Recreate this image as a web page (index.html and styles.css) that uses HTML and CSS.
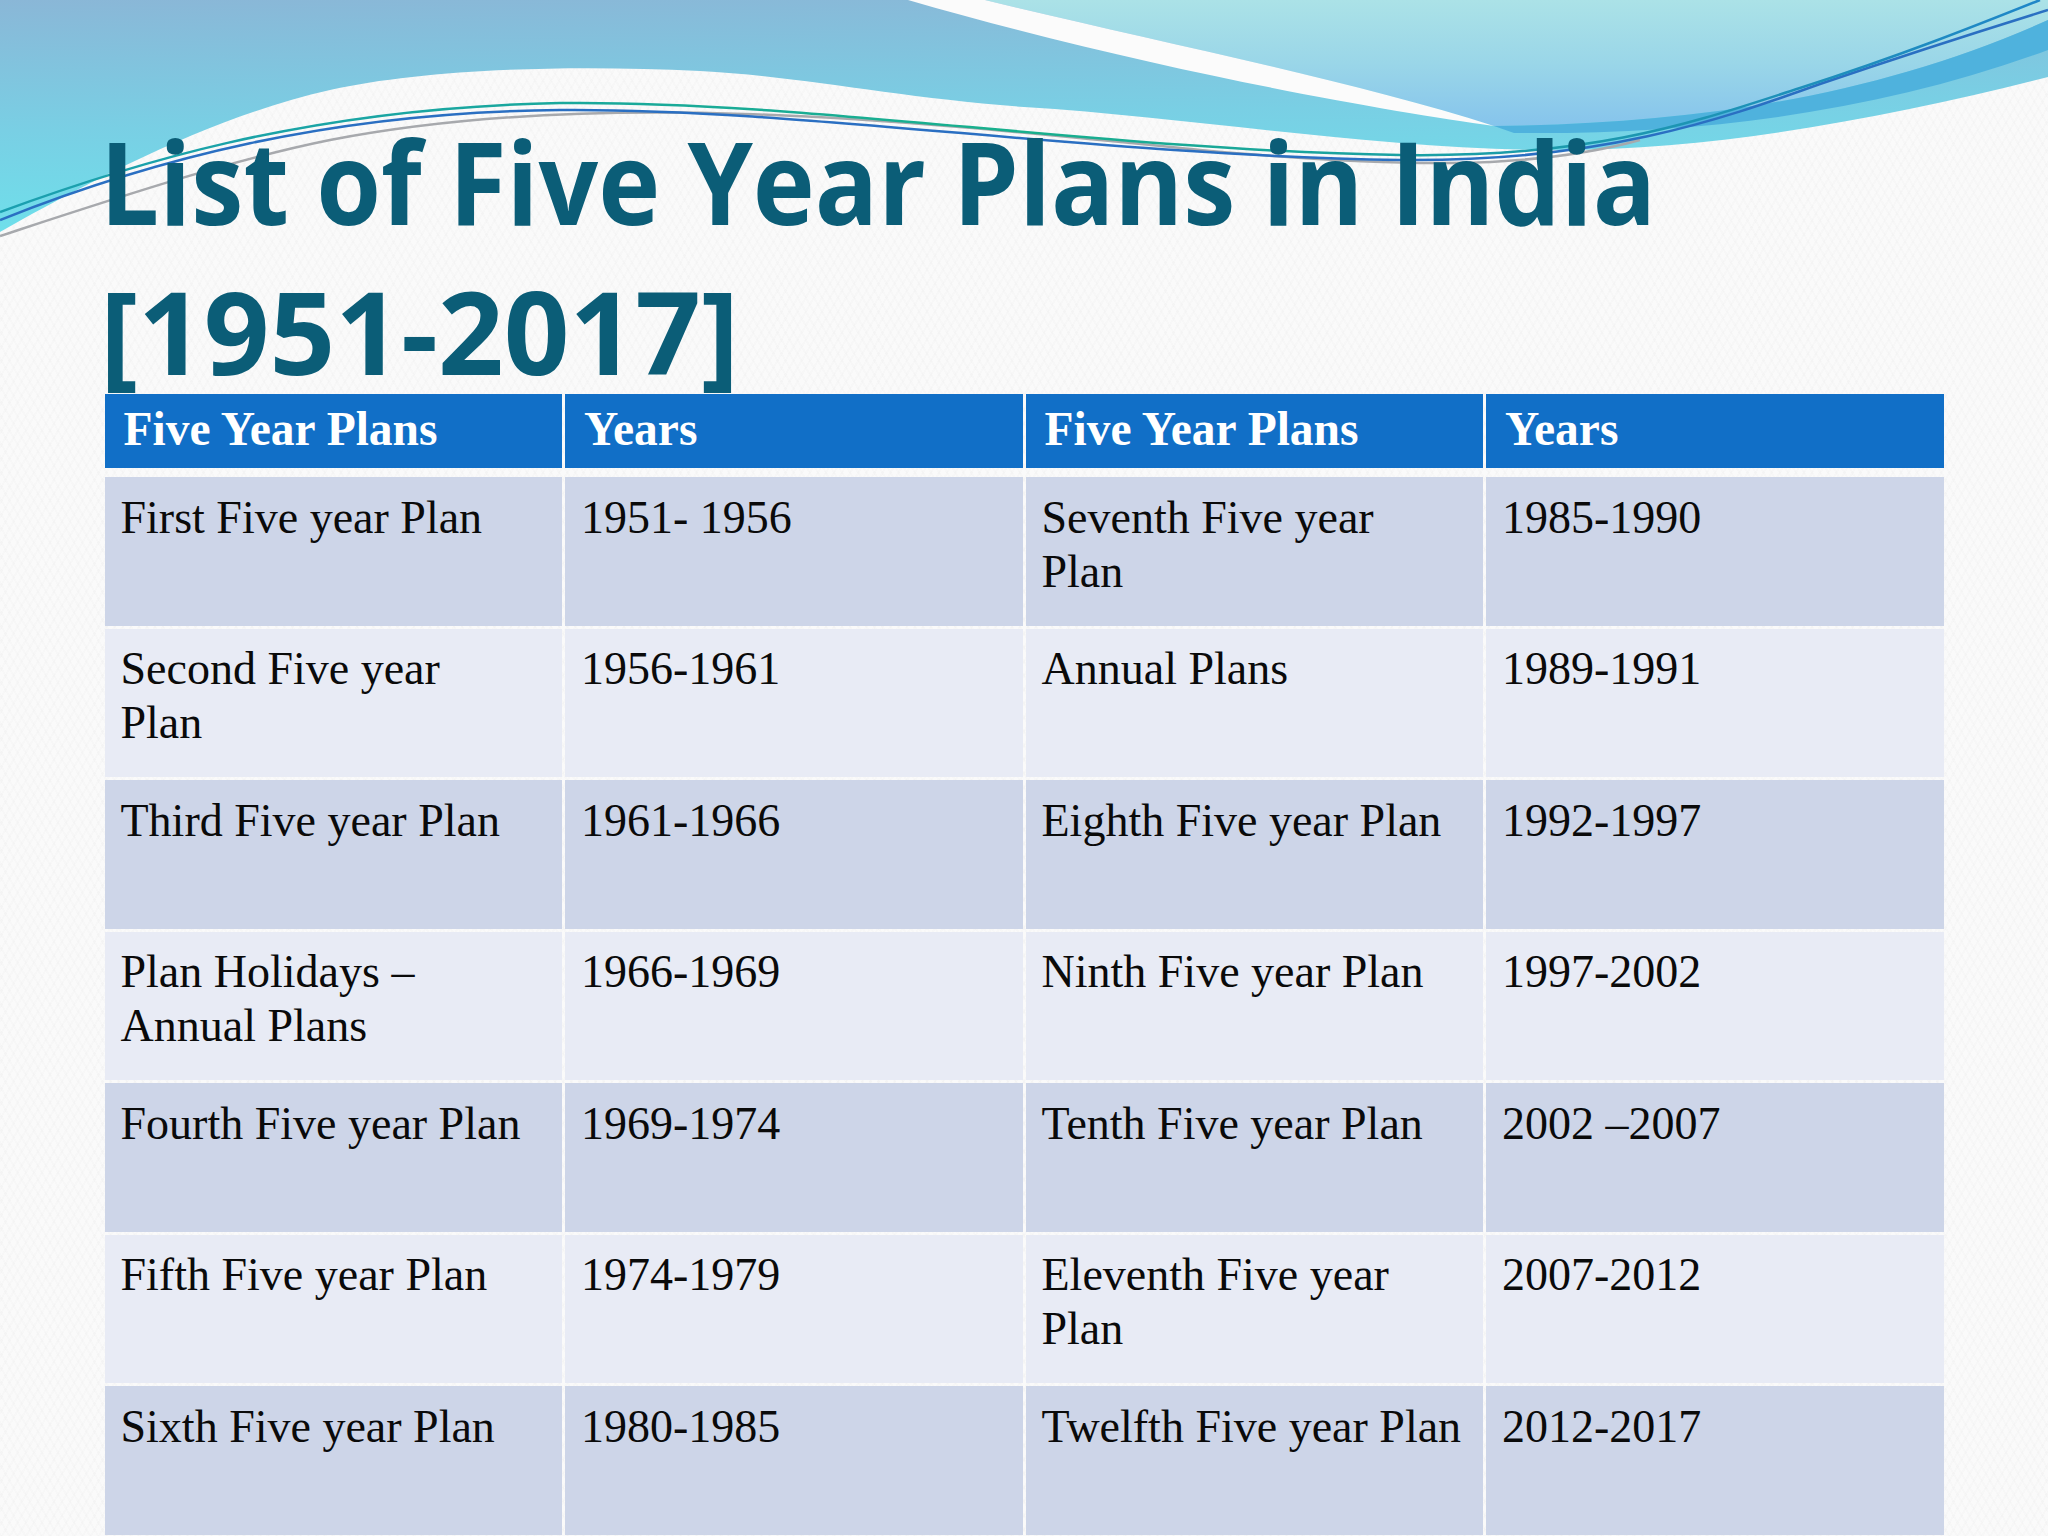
FILE: index.html
```html
<!DOCTYPE html>
<html lang="en">
<head>
<meta charset="utf-8">
<title>List of Five Year Plans in India</title>
<link rel="stylesheet" href="styles.css">
</head>
<body>
<div class="slide">
  <svg class="waves" viewBox="0 0 2048 260" width="2048" height="260" aria-hidden="true">
    <defs>
      <linearGradient id="gBase" x1="0" y1="0" x2="0.15" y2="1">
        <stop offset="0" stop-color="#8ab7d7"/>
        <stop offset="0.55" stop-color="#79cfe4"/>
        <stop offset="1" stop-color="#6ee0eb"/>
      </linearGradient>
      <linearGradient id="gRight" x1="0" y1="0" x2="0" y2="1">
        <stop offset="0" stop-color="#abe2e7"/>
        <stop offset="0.5" stop-color="#9ad6e8"/>
        <stop offset="1" stop-color="#86c4ec"/>
      </linearGradient>
      <linearGradient id="gLine" x1="0" y1="0" x2="1" y2="0">
        <stop offset="0" stop-color="#1b9fb0"/>
        <stop offset="0.5" stop-color="#18b08c"/>
        <stop offset="1" stop-color="#1f86c8"/>
      </linearGradient>
    </defs>
    <path d="M0,0 H2048 V77 C1900,115 1720,150 1560,150 C1380,150 1200,118 1024,107 C900,98 800,76 700,71 C560,64 420,70 330,90 C220,115 110,170 0,232 Z" fill="url(#gBase)"/>
    <path d="M985,0 H2048 V20 C1880,95 1700,124 1494,126 C1350,80 1150,40 985,0 Z" fill="url(#gRight)"/>
    <path d="M1494,126 C1700,124 1880,95 2048,20 V50 C1880,112 1700,135 1514,133 Z" fill="#4fb2dd"/>
    <path d="M908,0 H985 C1150,40 1350,80 1494,126 C1380,110 1150,70 908,0 Z" fill="#fbfbfb"/>
    <path d="M0,236 C110,200 230,160 330,140 C600,88 900,120 1200,150 C1400,168 1530,170 1640,140" fill="none" stroke="#a7a9ad" stroke-width="2.5"/>
    <path d="M0,220 C150,160 330,112 560,110 C800,108 1100,156 1400,160 C1600,162 1720,120 1820,84 C1920,50 1990,28 2048,10" fill="none" stroke="#2a6fc2" stroke-width="2.5"/>
    <path d="M0,212 C120,168 300,108 560,103 C800,100 1100,150 1400,155 C1600,158 1700,120 1800,88 C1900,56 1980,24 2040,0" fill="none" stroke="url(#gLine)" stroke-width="2.5"/>
  </svg>

  <header class="title-area">
    <h1 class="title"><span class="title-line narrow">List of Five Year Plans in India</span><span class="title-line second">[1951-2017]</span></h1>
  </header>

  <div class="plan-table">
    <div class="cell head">Five Year Plans</div>
    <div class="cell head">Years</div>
    <div class="cell head">Five Year Plans</div>
    <div class="cell head">Years</div>

    <div class="cell odd">First Five year Plan</div>
    <div class="cell odd">1951- 1956</div>
    <div class="cell odd">Seventh Five year<br>Plan</div>
    <div class="cell odd">1985-1990</div>

    <div class="cell even">Second Five year<br>Plan</div>
    <div class="cell even">1956-1961</div>
    <div class="cell even">Annual Plans</div>
    <div class="cell even">1989-1991</div>

    <div class="cell odd">Third Five year Plan</div>
    <div class="cell odd">1961-1966</div>
    <div class="cell odd">Eighth Five year Plan</div>
    <div class="cell odd">1992-1997</div>

    <div class="cell even">Plan Holidays –<br>Annual Plans</div>
    <div class="cell even">1966-1969</div>
    <div class="cell even">Ninth Five year Plan</div>
    <div class="cell even">1997-2002</div>

    <div class="cell odd">Fourth Five year Plan</div>
    <div class="cell odd">1969-1974</div>
    <div class="cell odd">Tenth Five year Plan</div>
    <div class="cell odd">2002 –2007</div>

    <div class="cell even">Fifth Five year Plan</div>
    <div class="cell even">1974-1979</div>
    <div class="cell even">Eleventh Five year<br>Plan</div>
    <div class="cell even">2007-2012</div>

    <div class="cell odd">Sixth Five year Plan</div>
    <div class="cell odd">1980-1985</div>
    <div class="cell odd">Twelfth Five year Plan</div>
    <div class="cell odd">2012-2017</div>
  </div>
</div>
</body>
</html>
```

FILE: styles.css
```css
html, body {
  margin: 0;
  padding: 0;
}

body {
  background: #f9f9f9;
  width: 2048px;
  height: 1536px;
  overflow: hidden;
}

.slide {
  position: relative;
  width: 2048px;
  height: 1536px;
  overflow: hidden;
  background-color: #fafafa;
  background-image:
    repeating-linear-gradient(60deg, rgba(0,0,0,0.012) 0 2px, transparent 2px 7px),
    repeating-linear-gradient(-60deg, rgba(0,0,0,0.012) 0 2px, transparent 2px 7px);
}

.waves {
  position: absolute;
  top: 0;
  left: 0;
  display: block;
}

.title-area {
  position: relative;
  height: 394px;
  box-sizing: border-box;
  padding: 105px 0 0 100px;
}

.title {
  margin: 0;
  font-family: "Open Sans", "Noto Sans", sans-serif;
  font-weight: 700;
  font-size: 115px;
  line-height: 151px;
  color: #0b5d77;
}

.title-line {
  display: block;
  white-space: nowrap;
  transform-origin: 0 50%;
}

.title-line.narrow {
  transform: scaleX(0.912);
}

.title-line.second {
  line-height: 118px;
  margin-top: 16px;
}

.plan-table {
  position: relative;
  margin-left: 104.5px;
  display: grid;
  grid-template-columns: repeat(4, 457.5px);
  grid-template-rows: 80px repeat(7, 148.5px);
  column-gap: 3px;
  row-gap: 3px;
}

.cell {
  box-sizing: border-box;
  font-family: "Liberation Serif", "Times New Roman", serif;
  font-size: 46px;
  line-height: 54px;
  color: #0a0a0a;
  padding: 13.5px 12px 0 16px;
  white-space: nowrap;
}

.head {
  height: 74px;
  background: #116fc7;
  color: #ffffff;
  font-weight: 700;
  font-size: 47.5px;
  padding: 8px 12px 0 19px;
}

.odd {
  background: #cdd5e8;
}

.even {
  background: #e8ebf5;
}
```
